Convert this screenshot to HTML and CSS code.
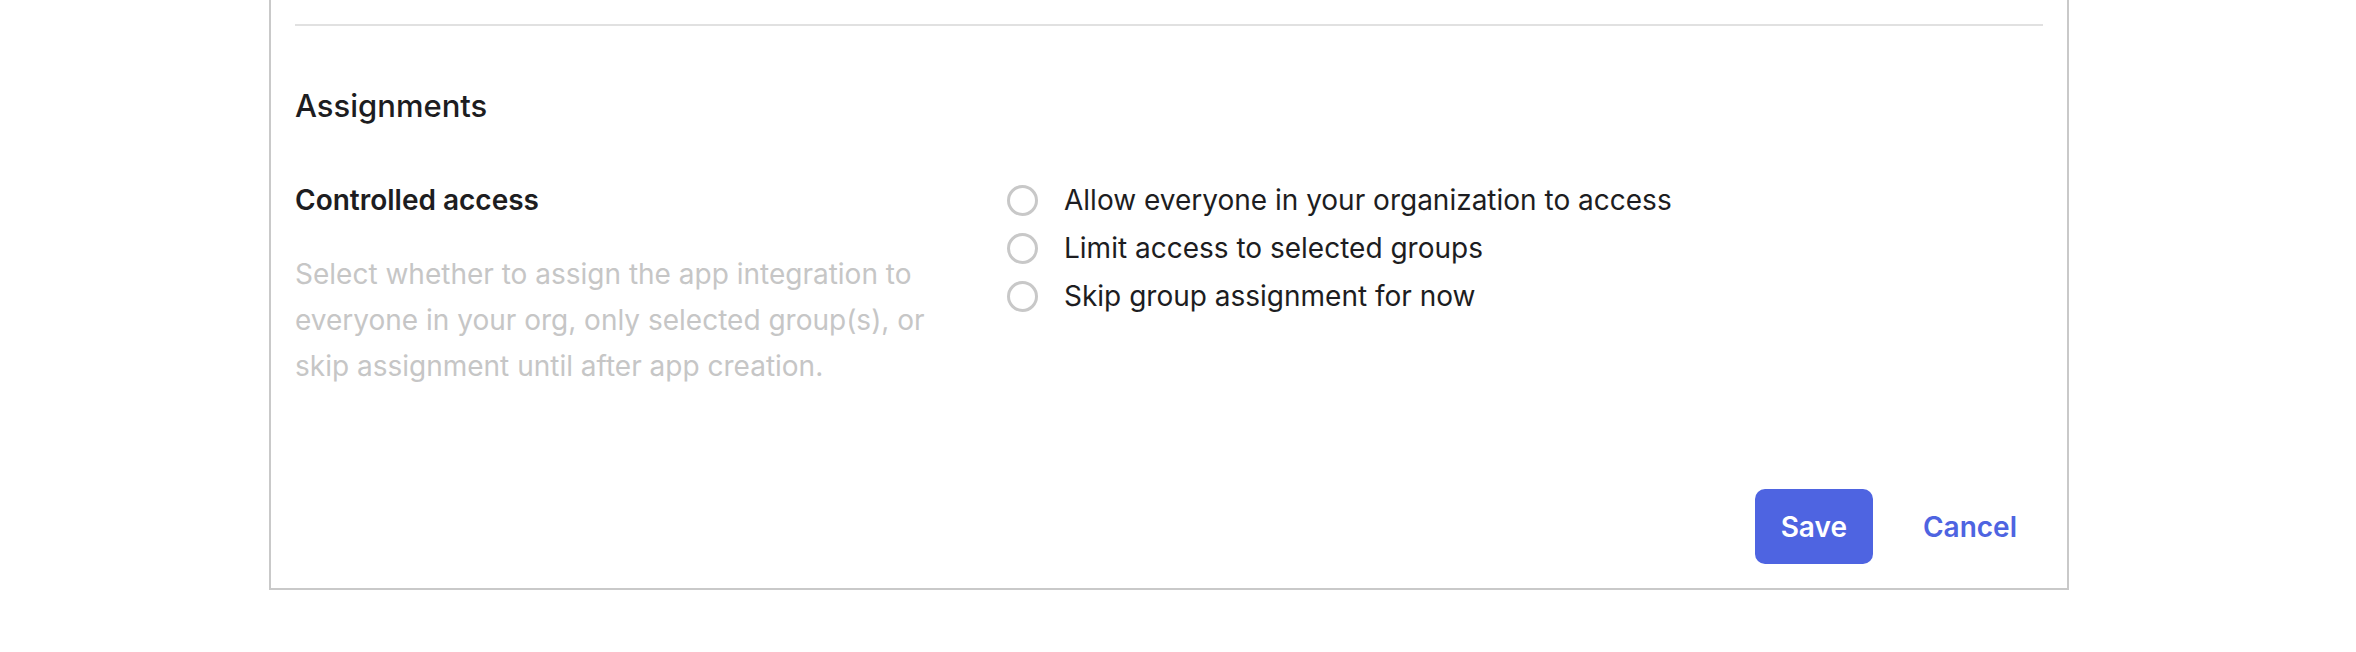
FILE: index.html
```html
<!DOCTYPE html>
<html lang="en">
<head>
<meta charset="utf-8">
<title>Assignments</title>
<link rel="stylesheet" href="styles.css">
</head>
<body>
<div class="card">
  <hr class="divider">
  <h2 class="section-title">Assignments</h2>
  <div class="field">
    <div class="field-info">
      <div class="field-label">Controlled access</div>
      <p class="field-hint">Select whether to assign the app integration to everyone in your org, only selected group(s), or skip assignment until after app creation.</p>
    </div>
    <div class="radio-group">
      <label class="radio"><span class="radio-dot"></span><span class="radio-text">Allow everyone in your organization to access</span></label>
      <label class="radio"><span class="radio-dot"></span><span class="radio-text">Limit access to selected groups</span></label>
      <label class="radio"><span class="radio-dot"></span><span class="radio-text">Skip group assignment for now</span></label>
    </div>
  </div>
  <div class="actions">
    <button class="btn btn-primary" type="button">Save</button>
    <button class="btn btn-link" type="button">Cancel</button>
  </div>
</div>
</body>
</html>
```
FILE: styles.css
```css
html, body {
  margin: 0;
  padding: 0;
  background: #ffffff;
}
body {
  font-family: Inter, "Noto Sans", sans-serif;
  color: #1d1d21;
}
.card {
  box-sizing: border-box;
  margin-left: 269px;
  width: 1800px;
  border: 2px solid #c9c9c9;
  border-top: 0;
  padding: 24px 24px 24px 24px;
  background: #ffffff;
}
.divider {
  margin: 0;
  border: 0;
  height: 2px;
  background: #e1e1e1;
}
.section-title {
  margin: 62px 0 0 0;
  font-size: 31px;
  line-height: 36px;
  font-weight: 500;
  color: #1d1d21;
}
.field {
  display: grid;
  grid-template-columns: 712px 1fr;
  margin-top: 52px;
}
.field-info {
  display: flex;
  flex-direction: column;
  max-width: 660px;
}
.field-label {
  font-size: 28px;
  line-height: 48px;
  font-weight: 600;
}
.field-hint {
  margin: 27px 0 0 0;
  font-size: 28px;
  line-height: 46px;
  color: #c6c6c6;
}
.radio-group {
  display: flex;
  flex-direction: column;
}
.radio {
  display: flex;
  align-items: center;
  height: 48px;
  font-size: 28px;
  line-height: 48px;
}
.radio-dot {
  box-sizing: border-box;
  width: 31px;
  height: 31px;
  border: 3px solid #c8c8c8;
  border-radius: 50%;
  flex: none;
}
.radio-text {
  margin-left: 26px;
}
.actions {
  display: flex;
  justify-content: flex-end;
  gap: 24px;
  margin-top: 100px;
}
.btn {
  font-family: Inter, "Noto Sans", sans-serif;
  font-size: 28px;
  font-weight: 600;
  height: 75px;
  padding: 0 26px;
  border: 0;
  border-radius: 10px;
  background: transparent;
  cursor: pointer;
}
.btn-primary {
  background: #4e64e1;
  color: #ffffff;
}
.btn-link {
  color: #4e64e1;
}
```
